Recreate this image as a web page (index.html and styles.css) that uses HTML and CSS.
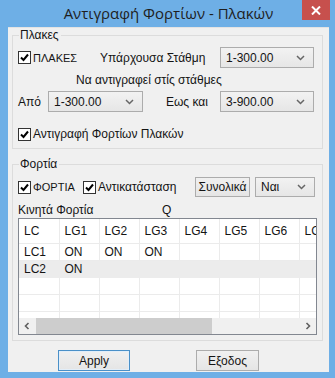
FILE: index.html
```html
<!DOCTYPE html>
<html lang="el">
<head>
    <meta charset="UTF-8">
    <title>Αντιγραφή Φορτίων - Πλακών</title>
    <link rel="stylesheet" href="styles.css">
</head>
<body>
<div class="window">
    <div class="titlebar">
        <span class="title">Αντιγραφή Φορτίων - Πλακών</span>
        <span class="close">
            <svg width="10" height="9" viewBox="0 0 10 9"><path d="M1 0.5 L9 8.5 M9 0.5 L1 8.5" stroke="#fff" stroke-width="2"/></svg>
        </span>
    </div>
    <div class="client">
        <div class="group plakes">
            <div class="group-title">Πλακες</div>
            <div class="row row1">
                <label class="check w-plakes"><span class="box"><svg width="11" height="11" viewBox="0 0 11 11"><path d="M2 5.5 L4.5 8 L9 2.5" fill="none" stroke="#000" stroke-width="2"/></svg></span><span class="caps">ΠΛΑΚΕΣ</span></label>
                <span class="w-yparx">Υπάρχουσα Στάθμη</span>
                <div class="combo w-combo"><span>1-300.00</span><svg width="9" height="6" viewBox="0 0 9 6"><path d="M1 1 L4.5 4.5 L8 1" fill="none" stroke="#666" stroke-width="1.5"/></svg></div>
            </div>
            <div class="row row2">Να αντιγραφεί στίς στάθμες</div>
            <div class="row row3">
                <span class="w-apo">Από</span>
                <div class="combo w-combo2"><span>1-300.00</span><svg width="9" height="6" viewBox="0 0 9 6"><path d="M1 1 L4.5 4.5 L8 1" fill="none" stroke="#666" stroke-width="1.5"/></svg></div>
                <span class="w-eos">Εως και</span>
                <div class="combo w-combo"><span>3-900.00</span><svg width="9" height="6" viewBox="0 0 9 6"><path d="M1 1 L4.5 4.5 L8 1" fill="none" stroke="#666" stroke-width="1.5"/></svg></div>
            </div>
            <div class="row row4">
                <label class="check"><span class="box"><svg width="11" height="11" viewBox="0 0 11 11"><path d="M2 5.5 L4.5 8 L9 2.5" fill="none" stroke="#000" stroke-width="2"/></svg></span>Αντιγραφή Φορτίων Πλακών</label>
            </div>
        </div>

        <div class="group fortia">
            <div class="group-title">Φορτία</div>
            <div class="row rowa">
                <label class="check w-fortia"><span class="box"><svg width="11" height="11" viewBox="0 0 11 11"><path d="M2 5.5 L4.5 8 L9 2.5" fill="none" stroke="#000" stroke-width="2"/></svg></span><span class="caps">ΦΟΡΤΙΑ</span></label>
                <label class="check w-antik"><span class="box"><svg width="11" height="11" viewBox="0 0 11 11"><path d="M2 5.5 L4.5 8 L9 2.5" fill="none" stroke="#000" stroke-width="2"/></svg></span>Αντικατάσταση</label>
                <button class="btn w-synol">Συνολικά</button>
                <div class="combo w-nai"><span>Ναι</span><svg width="9" height="6" viewBox="0 0 9 6"><path d="M1 1 L4.5 4.5 L8 1" fill="none" stroke="#666" stroke-width="1.5"/></svg></div>
            </div>
            <div class="row rowb">
                <span class="w-kinita">Κινητά Φορτία</span>
                <span>Q</span>
            </div>
            <div class="grid">
                <div class="grid-body">
                    <table>
                        <tr class="head"><td>LC</td><td>LG1</td><td>LG2</td><td>LG3</td><td>LG4</td><td>LG5</td><td>LG6</td><td>LG7</td></tr>
                        <tr><td>LC1</td><td>ON</td><td>ON</td><td>ON</td><td></td><td></td><td></td><td></td></tr>
                        <tr class="alt"><td>LC2</td><td>ON</td><td></td><td></td><td></td><td></td><td></td><td></td></tr>
                        <tr><td></td><td></td><td></td><td></td><td></td><td></td><td></td><td></td></tr>
                        <tr><td></td><td></td><td></td><td></td><td></td><td></td><td></td><td></td></tr>
                        <tr><td></td><td></td><td></td><td></td><td></td><td></td><td></td><td></td></tr>
                    </table>
                </div>
                <div class="hscroll">
                    <svg class="arrow" width="6" height="8" viewBox="0 0 6 8"><path d="M4.5 1 L1.5 4 L4.5 7" fill="none" stroke="#606060" stroke-width="1.6"/></svg>
                    <div class="track"><div class="thumb"></div></div>
                    <svg class="arrow" width="6" height="8" viewBox="0 0 6 8"><path d="M1.5 1 L4.5 4 L1.5 7" fill="none" stroke="#606060" stroke-width="1.6"/></svg>
                </div>
            </div>
        </div>

        <div class="buttons">
            <button class="btn default w-apply">Apply</button>
            <button class="btn w-exodos">Εξοδος</button>
        </div>
    </div>
</div>
</body>
</html>
```

FILE: styles.css
```css
body {
    margin: 0;
    font-family: "Liberation Sans", Arial, sans-serif;
    font-size: 12px;
    color: #141414;
}

.window {
    width: 335px;
    height: 378px;
    background: #6eafe6;
    box-sizing: border-box;
    padding: 0 6px 6px 8px;
    display: flex;
    flex-direction: column;
}

.titlebar {
    height: 27px;
    display: flex;
    justify-content: center;
    align-items: flex-start;
    position: relative;
}

.title {
    font-family: "Open Sans", "Noto Sans", sans-serif;
    font-size: 15px;
    line-height: 26px;
    color: #1e1e1e;
}

.close {
    position: absolute;
    right: -1px;
    top: 0;
    width: 28px;
    height: 20px;
    background: #c7504d;
    display: flex;
    align-items: center;
    justify-content: center;
}

.client {
    flex: 1;
    background: #f0f0f0;
    border-top: 1px solid #e3e3e3;
    display: flex;
    flex-direction: column;
}

.group {
    margin: 7px 6px 0 4px;
    border: 1px solid #dcdcdc;
    padding: 0 0 5px 5px;
}

.group.fortia {
    margin-top: 15px;
}

.group-title {
    width: max-content;
    height: 13px;
    line-height: 13px;
    margin: -7px 0 0 1px;
    padding: 0 2px 0 1px;
    background: #f0f0f0;
}

.row {
    display: flex;
    align-items: center;
}

.row1 {
    height: 21px;
    margin-top: 5px;
}

.row2 {
    height: 18px;
    margin-top: 3px;
    padding-left: 58px;
}

.row3 {
    height: 21px;
    margin-top: 2px;
}

.row4 {
    height: 18px;
    margin-top: 13px;
}

.check {
    display: flex;
    align-items: center;
}

.caps {
    font-size: 11px;
}

.box {
    width: 11px;
    height: 11px;
    border: 1px solid #333;
    background: #fff;
    margin-right: 2px;
    display: flex;
}

.w-plakes { width: 82px; }
.w-yparx { width: 120px; }
.w-apo { width: 30px; }
.w-eos { width: 54px; margin-left: 23px; }
.w-fortia { width: 65px; }
.w-antik { width: 112px; }
.w-kinita { width: 144px; }

.combo {
    box-sizing: border-box;
    height: 21px;
    border: 1px solid #acacac;
    background: linear-gradient(#f2f2f2, #e6e6e6);
    display: flex;
    align-items: center;
    justify-content: space-between;
    padding: 0 8px 0 5px;
}

.w-combo { width: 94px; }
.w-combo2 { width: 95px; }
.w-nai { width: 60px; height: 20px; margin-left: 5px; }

.btn {
    box-sizing: border-box;
    font-family: "Liberation Sans", Arial, sans-serif;
    font-size: 12px;
    color: #141414;
    border: 1px solid #acacac;
    background: linear-gradient(#f0f0f0, #e5e5e5);
    padding: 0;
    height: 21px;
}

.btn.default {
    border-color: #4a90c8;
    box-shadow: inset 0 0 0 1px #e2eef9;
}

.w-synol {
    width: 55px;
    height: 20px;
}

.rowa {
    height: 20px;
    margin-top: 6px;
}

.rowb {
    height: 16px;
    margin-top: 5px;
}

.grid {
    width: 297px;
    border: 1px solid #828790;
    background: #fff;
}

.grid-body {
    height: 99px;
    overflow: hidden;
}

table {
    border-collapse: collapse;
    table-layout: fixed;
    width: 320px;
}

td {
    height: 17px;
    padding: 0 0 0 5px;
    border-right: 1px solid #ebebeb;
    border-bottom: 1px solid #ebebeb;
    box-sizing: border-box;
    width: 40px;
    line-height: 16px;
    white-space: nowrap;
    overflow: hidden;
}

tr.head td {
    height: 24px;
}

tr.alt td {
    background: #ececec;
    border-color: #ececec;
}

.hscroll {
    height: 16px;
    display: flex;
    align-items: center;
    background: #f0f0f0;
}

.arrow {
    margin: 0 5px;
}

.track {
    flex: 1;
    height: 16px;
}

.thumb {
    margin-left: 1px;
    width: 176px;
    height: 16px;
    background: #cdcdcd;
}

.buttons {
    display: flex;
    margin-top: 9px;
    padding-left: 50px;
}

.w-apply { width: 72px; }
.w-exodos { width: 63px; margin-left: 66px; }
```
